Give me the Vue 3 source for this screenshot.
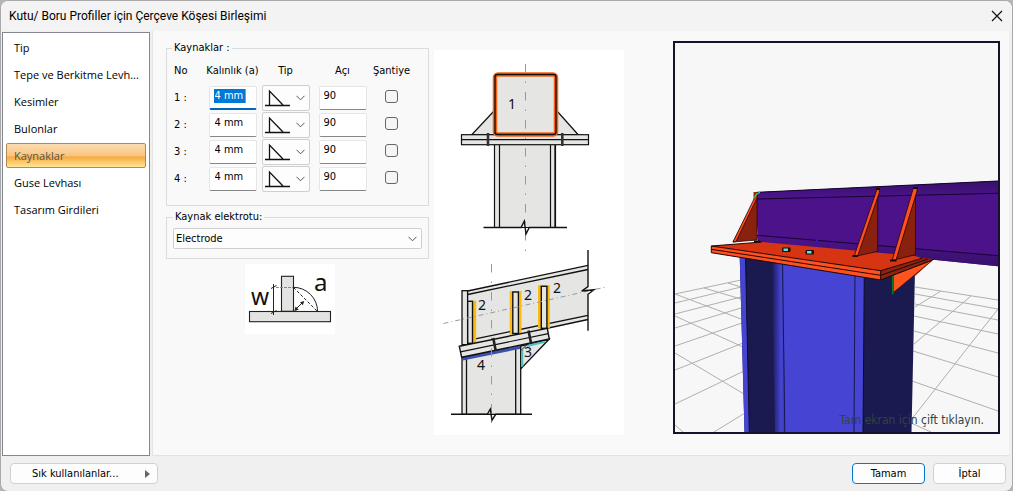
<script setup>
import { ref, reactive } from 'vue'

const sections = [
  'Tip',
  'Tepe ve Berkitme Levh...',
  'Kesimler',
  'Bulonlar',
  'Kaynaklar',
  'Guse Levhası',
  'Tasarım Girdileri',
]
const active = ref('Kaynaklar')

const welds = reactive(
  [1, 2, 3, 4].map((no) => ({ no, size: '4 mm', type: 'fillet', angle: '90', site: false }))
)
const electrode = ref('Electrode')
</script>

<template>
  <div class="dialog">
    <header class="titlebar">
      <h1>Kutu/ Boru Profiller için Çerçeve Köşesi Birleşimi</h1>
      <button class="close" type="button" aria-label="Kapat">
        <svg width="12" height="12" viewBox="0 0 12 12"><path d="M1 1L11 11M11 1L1 11" stroke="#111" stroke-width="1.2" /></svg>
      </button>
    </header>

    <div class="body">
      <nav class="sidebar">
        <button
          v-for="s in sections"
          :key="s"
          type="button"
          :class="['item', { active: s === active }]"
          @click="active = s"
        >{{ s }}</button>
      </nav>

      <main class="content">
        <section class="forms">
          <fieldset class="group welds">
            <legend>Kaynaklar :</legend>
            <table>
              <thead>
                <tr>
                  <th class="no">No</th>
                  <th class="size">Kalınlık (a)</th>
                  <th class="type">Tip</th>
                  <th class="angle">Açı</th>
                  <th class="site">Şantiye</th>
                </tr>
              </thead>
              <tbody>
                <tr v-for="(w, i) in welds" :key="w.no">
                  <td class="no">{{ w.no }} :</td>
                  <td>
                    <span :class="['field', { focused: i === 0 }]">
                      <input v-model="w.size" type="text" :class="{ selected: i === 0 }" :aria-label="`Kalınlık ${w.no}`" />
                    </span>
                  </td>
                  <td>
                    <span class="combo">
                      <select v-model="w.type" :aria-label="`Tip ${w.no}`">
                        <option value="fillet"></option>
                      </select>
                      <svg class="weld-icon" width="26" height="18" viewBox="0 0 26 18">
                        <path d="M0 16.5H25M4.5 17V2L18 16" fill="none" stroke="#111" stroke-width="1.3" />
                      </svg>
                      <svg class="chevron" width="9" height="6" viewBox="0 0 9 6"><path d="M0.5 0.8L4.5 4.8L8.5 0.8" fill="none" stroke="#555" /></svg>
                    </span>
                  </td>
                  <td>
                    <span class="field angle-field">
                      <input v-model="w.angle" type="text" :aria-label="`Açı ${w.no}`" />
                    </span>
                  </td>
                  <td class="site"><input v-model="w.site" type="checkbox" :aria-label="`Şantiye ${w.no}`" /></td>
                </tr>
              </tbody>
            </table>
          </fieldset>

          <fieldset class="group electrode">
            <legend><label for="electrode">Kaynak elektrotu:</label></legend>
            <span class="combo wide">
              <select id="electrode" v-model="electrode">
                <option>Electrode</option>
              </select>
              <svg class="chevron" width="9" height="6" viewBox="0 0 9 6"><path d="M0.5 0.8L4.5 4.8L8.5 0.8" fill="none" stroke="#555" /></svg>
            </span>
          </fieldset>

          <svg class="weld-size" viewBox="245 264 90 70" width="90" height="70">
            <rect x="245" y="264" width="90" height="70" fill="#fff" />
            <g fill="#e3e3e2" stroke="#222" stroke-width="1.1">
              <rect x="281.5" y="276.3" width="12" height="35" />
              <rect x="249.5" y="311.5" width="81" height="10.2" />
            </g>
            <g fill="none" stroke="#222" stroke-width="1">
              <path d="M273.5 284V315M271 288.5L276.5 285.5M271 313.5L276.5 310.5" />
              <path d="M276 287.5H293" stroke="#888" stroke-dasharray="3 1" />
              <path d="M293.3 287.3A24.3 24.3 0 0 1 317.6 311.5" />
              <path d="M293.5 287.5L317.5 311.5" stroke-dasharray="3 2" />
              <path d="M295.5 309.5L303 302" />
            </g>
            <path d="M294.3 311L295.6 306.6L298.7 309.7ZM304.2 301L302.9 305.2L300 302.3Z" fill="#222" />
            <text x="251" y="305" font-size="23">w</text>
            <text x="314" y="291" font-size="24">a</text>
          </svg>
        </section>

        <svg class="diagram" viewBox="434 50 190 385" width="190" height="385">
          <rect x="434" y="50" width="190" height="385" fill="#fff" />
          <!-- front view -->
          <g fill="#e5e5e4" stroke="#111" stroke-width="1.2">
            <path d="M494 111L472 134.500H494ZM557 111L578 134.500H557Z" />
            <path d="M494.500 145V227.500H555.500V145" />
            <path d="M499.500 145V227.500M550.500 145V227.500" />
            <rect x="461.500" y="134.700" width="127" height="10" />
            <path d="M461.500 139.700H588.500" />
          </g>
          <path d="M554.500 145V227" stroke="#555" stroke-width="1" />
          <rect x="495" y="74.500" width="61" height="60" rx="3" fill="#e5e5e4" stroke="#f4661a" stroke-width="4.600" />
          <rect x="495" y="74.500" width="61" height="60" rx="2.500" fill="none" stroke="#111" stroke-width="1.400" />
          <path d="M488 133V146M562.300 133V146" stroke="#333" stroke-width="2.600" />
          <path d="M525.500 64V252" stroke="#999" stroke-width="1" stroke-dasharray="8.500 9 1.500 9" />
          <path d="M483.500 227.500H521L524.300 221L526 234L529.300 227.500H567" fill="none" stroke="#111" stroke-width="1.400" />
          <text x="508" y="109">1</text>

          <!-- side view -->
          <g fill="#e5e5e4" stroke="#111" stroke-width="1.300">
            <path d="M467.700 291L588 265.300V319.300L467.700 344Z" stroke="none" />
            <path d="M467.700 291L588 265.300M467.700 294.500L588 269.500M473 339.300L588 315.300M546 328.500L588 319.500" />
            <rect x="462" y="290.700" width="5.600" height="54" />
            <path d="M462 355V414.300H520.700V346Z" />
            <path d="M466.500 356V414M515.700 348V414" />
          </g>
          <g fill="#fdbb10">
            <rect x="472.500" y="300.700" width="3.700" height="42" />
            <rect x="509.700" y="291" width="11.800" height="43.300" />
            <rect x="538" y="285.300" width="11.800" height="43" />
          </g>
          <g fill="#e5e5e4" stroke="#111" stroke-width="1.400">
            <rect x="467.700" y="301.300" width="4.800" height="42" />
            <rect x="512.800" y="292" width="5.600" height="41.500" />
            <rect x="541.300" y="286.300" width="5.600" height="42" />
          </g>
          <path d="M462.500 358.700L520.500 347" stroke="#3c50ac" stroke-width="3.500" />
          <path d="M520.700 346L549 339.300L520.700 369Z" fill="#e5e5e4" stroke="#111" stroke-width="1.300" />
          <path d="M527 346L545 341.800M522.300 350V366.500" fill="none" stroke="#4cc0c6" stroke-width="2" />
          <path d="M521 350.500L527 344.500" stroke="#111" />
          <path d="M459.300 346.300L547.300 328.300L549.300 339L461.700 357.300Z" fill="#e5e5e4" stroke="#111" stroke-width="1.400" />
          <path d="M460.500 351.800L548.300 333.700" stroke="#111" stroke-width="1.200" />
          <path d="M493.300 338L495.700 350.700M528.500 330.500L531 343" stroke="#222" stroke-width="2.600" />
          <path d="M491.500 264V429" stroke="#999" stroke-dasharray="8.500 9 1.500 9" />
          <path d="M443.500 323.500L606 287" stroke="#999" stroke-dasharray="5 3 1 3" />
          <path d="M588 250V286.700L581.700 291L594 289.700L588 294.300V330.700M451 414.300H487.300L490.300 409L492 420.300L495.700 414.300H532" fill="none" stroke="#111" stroke-width="1.400" />
          <text x="478" y="310">2</text>
          <text x="524" y="300">2</text>
          <text x="553" y="293">2</text>
          <text x="524" y="357">3</text>
          <text x="477" y="370">4</text>
        </svg>

        <div class="viewer">
          <svg viewBox="675 43 323 389" preserveAspectRatio="xMidYMid slice">
            <defs>
              <linearGradient id="web" x1="0" x2="1" y1="0" y2="0">
                <stop offset="0" stop-color="#1b1a55" />
                <stop offset="0.7" stop-color="#4645d3" />
                <stop offset="1" stop-color="#3b3ab8" />
              </linearGradient>
              <linearGradient id="topBand" x1="0" x2="0" y1="0" y2="1">
                <stop offset="0" stop-color="#38106a" />
                <stop offset="1" stop-color="#4d148f" />
              </linearGradient>
              <linearGradient id="bottomBand" x1="0" x2="0" y1="0" y2="1">
                <stop offset="0" stop-color="#4d148f" />
                <stop offset="1" stop-color="#38106a" />
              </linearGradient>
            </defs>
            <g fill="none" stroke="#adb0ac" stroke-width="1">
              <path d="M675 294L741 280M675 303L741 287M675 314L741 297M675 328L741 308M675 346L742 323M675 370L743 343M675 404L744 371M714 432L745 413" />
              <path d="M675 294L741 319M675 316L743 347M675 353L744 394M675 425L683 432M704 288L741 299M728 283L741 287" />
              <path d="M915 287L998 300M915 294L998 309M915 304L998 320M914 316L998 334M914 331L998 353M913 351L998 377M912 381L998 411M911 423L931 432" />
              <path d="M941 291L915 307M971 296L914 344M998 309L911 420" />
            </g>

            <!-- column -->
            <path d="M739.700 256L915 270L911.500 432H744.500Z" fill="#1b1a50" />
            <path d="M739.700 256L745.500 257L749.300 432H744.500Z" fill="#4645d3" />
            <path d="M745.500 257L749.300 432" stroke="#0b0b28" />
            <path d="M772 260L784 262L785 432H775Z" fill="url(#web)" />
            <path d="M783 262L864.300 274L863 432H785Z" fill="#4645d3" />
            <path d="M782.500 262L784.800 432M855 272L854 432" stroke="#17174f" />
            <path d="M864.300 274L863 432" stroke="#0b0b28" />

            <!-- beam -->
            <path d="M755 192.300L998 181V266.300L758 242Z" fill="#4b128a" />
            <path d="M755 192.300L998 181V193.300L757 199Z" fill="url(#topBand)" />
            <path d="M757 235.300L998 255.700V266.300L758 242Z" fill="url(#bottomBand)" />
            <path d="M757 199L998 193.300M757 235.300L998 255.700M757 192.300L998 181" fill="none" stroke="#17042e" />
            <rect x="816" y="239" width="2" height="2" fill="#2a16ee" />

            <!-- lower gusset -->
            <path d="M915 266L922 258L934 259L915 276Z" fill="#8b2410" />
            <path d="M893.300 275L932 260.500L893.300 292.500Z" fill="#ff5420" stroke="#3a0d04" stroke-width="0.600" />
            <path d="M892.700 276V294.500" stroke="#0b7a1c" stroke-width="1.500" />

            <!-- end plate -->
            <path d="M733 242.500L756 240L757 243L733 245Z" fill="#fff" />
            <path d="M711.300 246L762 242L915 256L922 258.300L880.700 270.700Z" fill="#d73414" />
            <path d="M711.300 246L880.700 270.700V280L711.500 252.700Z" fill="#ff5020" />
            <path d="M880.700 270.700L922 258.300L934 259.300L880.700 280Z" fill="#8b2410" />
            <path d="M711.300 246L880.700 270.700L922 258.300M711.300 246V252.700L880.700 280L934 259.300M711.300 249.300L880.700 275.300L928 259M880.700 270.700V280M711.300 246L762 242" fill="none" stroke="#230602" stroke-width="1" />

            <!-- stiffeners -->
            <g stroke="#2a0803" stroke-width="0.800">
              <path d="M757 196L757 240L733 242Z" fill="#8a210f" />
              <path d="M733 242L753.500 200L757 194V198L736 241.500Z" fill="#ff5020" />
              <path d="M753.500 192H757V197L753.500 201Z" fill="#9c2b15" stroke="none" />
              <path d="M877.700 190V251.300L857 256Z" fill="#8a210f" />
              <path d="M854.300 255.700L877 189.300H879.300V192.500L857.700 255.700Z" fill="#ff5020" />
              <path d="M915.500 190V254.700L896 259.500Z" fill="#8a210f" />
              <path d="M892.300 260L913.300 188.300H917V191L896 260Z" fill="#ff5020" />
            </g>
            <path d="M754.500 198C755.500 195 757 193 760 192.500" fill="none" stroke="#12d84a" stroke-width="1.300" />
            <path d="M754 241.500H760M852.500 256H858M890 260.500H896.500M876 189H880M913 188H918" stroke="#1a0502" stroke-width="2" />

            <!-- bolts -->
            <g fill="#111">
              <rect x="782" y="247.500" width="8.500" height="4.500" rx="1" />
              <rect x="805.500" y="250" width="8.500" height="4.500" rx="1" />
            </g>
            <path d="M783.500 249.800H788M807 252.300H811.500" stroke="#5fe0e6" stroke-width="2.400" />
          </svg>
          <span class="hint">Tam ekran için çift tıklayın.</span>
        </div>
      </main>
    </div>

    <footer class="footer">
      <button type="button" class="btn favourites">
        <span>Sık kullanılanlar...</span>
        <svg width="5" height="8" viewBox="0 0 5 8"><path d="M0 0L5 4L0 8Z" fill="#666" /></svg>
      </button>
      <button type="button" class="btn primary">Tamam</button>
      <button type="button" class="btn">İptal</button>
    </footer>
  </div>
</template>

<style>
html, body { background: #b5b5b5; }
</style>

<style scoped>
.dialog {
  box-sizing: border-box;
  min-height: 100vh;
  display: flex;
  flex-direction: column;
  background: #f0f0f0;
  border: 1px solid #a9a9a9;
  border-radius: 8px;
  overflow: hidden;
  color: #000;
  font: 11px/14px "DejaVu Sans Condensed", "DejaVu Sans", sans-serif;
}
button, input, select { font: inherit; color: inherit; }
.titlebar {
  display: flex;
  align-items: center;
  justify-content: space-between;
  height: 30px;
  padding: 0 9px 0 8px;
  background: #f3f3f3;
}
h1 {
  margin: 0;
  font: 12px/16px Roboto, "Noto Sans", sans-serif;
}
.close {
  display: flex;
  padding: 0;
  border: 0;
  background: none;
}
.body {
  flex: 1;
  display: grid;
  grid-template-columns: 148px minmax(0, 1fr);
  gap: 2px;
  padding: 0 3px 0 1px;
}
.sidebar {
  display: flex;
  flex-direction: column;
  gap: 2px;
  margin-top: 1px;
  padding: 2px 3px;
  border: 1px solid #828790;
  background: #fff;
}
.item {
  height: 25px;
  padding: 0 7px;
  border: 1px solid transparent;
  border-radius: 2px;
  background: none;
  text-align: left;
  white-space: nowrap;
  font-family: "Open Sans", "Noto Sans", sans-serif;
}
.item.active {
  border-color: #b08a50;
  color: #555;
  background: linear-gradient(#fbdcb4 0, #fac57f 50%, #f8a941 56%, #fdd980 90%, #fde49a 100%);
}
.content {
  display: grid;
  grid-template-columns: 263px 190px minmax(0, 1fr);
  align-items: start;
  padding: 10px 9px 20px 13px;
  background: #f9f9f9;
  border-left: 1px solid #e5e5e5;
  border-bottom: 1px solid #e2e2e2;
}
.group {
  min-width: 0;
  margin: 0;
  border: 1px solid #dcdcdc;
}
.group legend { padding: 0 2px; height: 14px; }
.welds { height: 165px; box-sizing: border-box; padding: 8px 18px 0 5px; }
.electrode { height: 49px; box-sizing: border-box; margin-top: 4px; padding: 4px 6px 0; }
table {
  width: 100%;
  table-layout: fixed;
  border-collapse: collapse;
}
th, td { padding: 0; height: 27px; font-weight: normal; text-align: center; vertical-align: middle; }
th { height: 14px; padding: 1px 0 6px; white-space: nowrap; }
th.no, td.no { width: 32px; padding-left: 2px; text-align: left; }
th.size, th.type { width: 53px; }
th.angle { width: 61px; }
.field {
  display: block;
  box-sizing: border-box;
  width: 48px;
  height: 24px;
  margin: 0 auto;
  padding: 2px 4px;
  border: 1px solid #e6e6e6;
  border-bottom: 1px solid #868686;
  border-radius: 2px;
  background: #fff;
}
.field input {
  display: block;
  box-sizing: border-box;
  width: 32px;
  height: 14px;
  margin: 0;
  padding: 0 1px;
  border: 0;
  outline: 0;
  background: transparent;
}
.field.focused { border-bottom: 2px solid #0067c0; }
.field input.selected {
  border-right: 1px solid #e88030;
  background: #0078d7;
  color: #fff;
}
.angle-field { padding: 2px 3px; }
.combo {
  position: relative;
  display: block;
  box-sizing: border-box;
  width: 48px;
  height: 26px;
  margin: 0 auto;
  border: 1px solid #cfcfcf;
  border-radius: 2px;
  background: #fdfdfd;
}
.combo select {
  display: block;
  width: 100%;
  height: 100%;
  padding: 0 2px;
  border: 0;
  outline: 0;
  appearance: none;
  background: none;
}
.combo.wide { width: 100%; height: 21px; }
.weld-icon { position: absolute; left: 2px; bottom: 3px; pointer-events: none; }
.chevron { position: absolute; right: 4px; top: 9px; pointer-events: none; }
.combo.wide .chevron { top: 7px; }
.site input {
  display: block;
  appearance: none;
  box-sizing: border-box;
  width: 13px;
  height: 13px;
  margin: 0 auto 2px;
  border: 1px solid #666;
  border-radius: 3px;
  background: #f5f5f5;
}
.weld-size { display: block; margin: 5px 0 0 79px; }
svg text { font-family: "Noto Sans", sans-serif; fill: #111; }
.diagram { margin: 9px 0 0 5px; }
.diagram text { font-size: 14px; }
.viewer {
  position: relative;
  box-sizing: border-box;
  height: 393px;
  margin-left: 54px;
  border: 2px solid #14142a;
  background: #f7f7f7;
  overflow: hidden;
}
.viewer svg { display: block; width: 100%; height: 100%; }
.hint {
  position: absolute;
  right: 14px;
  bottom: 4px;
  color: #2f4444;
  font-size: 12px;
  line-height: 16px;
}
.footer {
  display: flex;
  align-items: center;
  gap: 8px;
  height: 35px;
  padding: 0 6px 0 9px;
}
.btn {
  box-sizing: border-box;
  width: 73px;
  height: 21px;
  padding: 0;
  border: 1px solid #d0d0d0;
  border-radius: 4px;
  background: #fdfdfd;
}
.btn.primary { border-color: #0078d4; }
.btn.favourites {
  display: flex;
  align-items: center;
  justify-content: space-between;
  width: 148px;
  margin-right: auto;
  padding: 0 7px 0 21px;
}
</style>
